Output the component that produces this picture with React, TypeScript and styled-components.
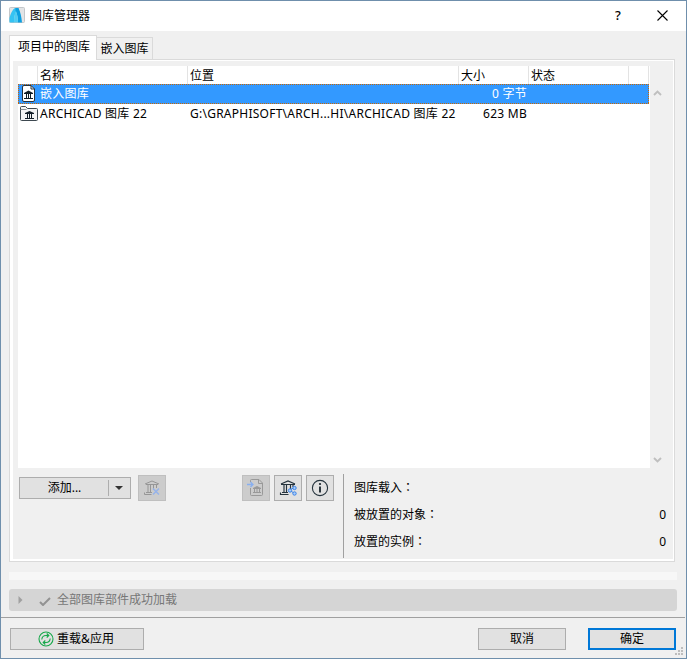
import { ReactNode, useState } from 'react';
import styled, { createGlobalStyle } from 'styled-components';

type Library = {
  name: string;
  location: string;
  size: string;
  status: string;
  icon: ReactNode;
};

const LogoIcon = () => (
  <svg width="16" height="16" viewBox="0 0 16 16">
    <rect x="0.5" y="0.5" width="15" height="15" rx="1" fill="#e2e4e6" stroke="#c3c7ca" />
    <path d="M0.500 15.500V11C1.500 6.500 3.500 2.500 6 1H9.500L7.500 4C5.500 7 5 11 5 15.500z" fill="#35c3f3" />
    <path d="M6.500 1h3C11.500 5 12.500 10 13 15.500H9C8.800 11 8.200 6.500 6.500 4z" fill="#0c9fe0" />
    <path d="M5 15.500C5 10 5.500 6 7 4C8.300 7 8.900 11 9 15.500z" fill="#4fccf3" />
  </svg>
);

const EmbeddedIcon = () => (
  <svg width="13" height="17" viewBox="0 0 13 17">
    <path d="M2 0.500h7l3.500 3.500v11a1.500 1.500 0 0 1-1.500 1.500h-9a1.500 1.500 0 0 1-1.500-1.500v-13a1.500 1.500 0 0 1 1.500-1.500z" fill="#fff" stroke="#27333d" />
    <path d="M9 0.500v3.500h3.500" fill="none" stroke="#27333d" />
    <path d="M2 8L6.500 5.500L11 8V9H2z" fill="#111d26" />
    <path d="M4.500 9v4M6.500 9v4M8.500 9v4M2 13.500h9" fill="none" stroke="#111d26" />
  </svg>
);

const FolderIcon = () => (
  <svg width="18" height="15" viewBox="0 0 18 15">
    <path d="M0.500 13.500V1.500a1 1 0 0 1 1-1h4l2 2h9a1 1 0 0 1 1 1v10a1 1 0 0 1-1 1h-15a1 1 0 0 1-1-1z" fill="#f3f4f4" stroke="#3d4850" />
    <path d="M0.500 3.500h6" stroke="#8c9398" />
    <path d="M5 7L9.500 5L14 7V8H5z" fill="#111d26" />
    <path d="M7.500 8v4M9.500 8v4M11.500 8v4M5 12.500h9" fill="none" stroke="#111d26" />
  </svg>
);

const RemoveIcon = () => (
  <svg width="18" height="18" viewBox="0 0 18 18" fill="none">
    <path d="M2 5L9 2L16 5M3 5.500h12M5 6v7M7.500 6v7M10.500 6v5M13.500 6v3M3 13.500h6M1.500 13.500v2h7" stroke="#969696" />
    <path d="M10 9.500l6 6M16 9.500l-6 6" stroke="#96b3ea" strokeWidth="1.500" />
  </svg>
);

const EmbedIcon = () => (
  <svg width="18" height="18" viewBox="0 0 18 18" fill="none">
    <path d="M3.500 3V1.500a1 1 0 0 1 1-1h7.500L15.500 4v11.500a1 1 0 0 1-1 1h-10a1 1 0 0 1-1-1V9M11.500 0.500v4h4" stroke="#999" />
    <path d="M6 9L10 7L14 9V10H6z" fill="#999" />
    <path d="M7.500 10v3M10 10v3M12.500 10v3M6 13.500h8" stroke="#999" />
    <path d="M0 5.500h6M3.500 3L6 5.500L3.500 8" stroke="#88aff0" strokeWidth="1.300" />
  </svg>
);

const CloudIcon = () => (
  <svg width="18" height="18" viewBox="0 0 18 18" fill="none">
    <path d="M2 5L9 2L16 5M2 5.500h14M5 6v7M7.500 6v7M11.500 6v4M14 6v2M3 13.500h6M1.500 13.500v2h8" stroke="#25333d" strokeWidth="1.150" />
    <path d="M15.500 8.500l-5 2.500l5 3.500" stroke="#3c83e5" />
    <g fill="#a9cdfb" stroke="#3c83e5">
      <circle cx="15.500" cy="9" r="1.700" />
      <circle cx="11" cy="11.500" r="1.700" />
      <circle cx="15.500" cy="14.500" r="1.700" />
    </g>
  </svg>
);

const InfoIcon = () => (
  <svg width="18" height="18" viewBox="0 0 18 18">
    <circle cx="9" cy="9" r="7.600" fill="none" stroke="#25333d" strokeWidth="1.100" />
    <path d="M9 7.500v6" stroke="#17232c" strokeWidth="1.800" />
    <circle cx="9" cy="5" r="1.100" fill="#17232c" />
  </svg>
);

const ReloadIcon = () => (
  <svg width="16" height="16" viewBox="0 0 16 16" fill="none" stroke="#16a84a" strokeWidth="1.100">
    <circle cx="8" cy="8" r="7" />
    <path d="M3.800 8.500C4 6 5.500 4.500 8 4.500h2.500M8.700 2.500L10.800 4.500L8.700 6.500M12.200 7.500C12 10 10.500 11.500 8 11.500H5.500M7.300 9.500L5.200 11.500L7.300 13.500" />
  </svg>
);

const libraries: Library[] = [
  { name: '嵌入图库', location: '', size: '0 字节', status: '', icon: <EmbeddedIcon /> },
  {
    name: 'ARCHICAD 图库 22',
    location: 'G:\\GRAPHISOFT\\ARCH...HI\\ARCHICAD 图库 22',
    size: '623 MB',
    status: '',
    icon: <FolderIcon />,
  },
];

const stats = [
  { label: '图库载入', value: '' },
  { label: '被放置的对象', value: '0' },
  { label: '放置的实例', value: '0' },
];

const App = () => {
  const [tab, setTab] = useState(0);
  const [selected, setSelected] = useState(0);

  return (
    <>
      <GlobalStyle />
      <Dialog>
        <TitleBar>
          <LogoIcon />
          <Title>图库管理器</Title>
          <HelpButton>?</HelpButton>
          <CloseButton>
            <svg width="11" height="11" viewBox="0 0 11 11">
              <path d="M0.500 0.500l10 10M10.500 0.500l-10 10" stroke="#000" strokeWidth="1.100" />
            </svg>
          </CloseButton>
        </TitleBar>

        <Content>
          <Tabs>
            {['项目中的图库', '嵌入图库'].map((label, i) => (
              <Tab key={label} $active={tab === i} onClick={() => setTab(i)}>
                {label}
              </Tab>
            ))}
          </Tabs>
          <Panel>
            <ListArea>
              <List>
                <HeaderRow>
                  <HeaderCell />
                  <HeaderCell>名称</HeaderCell>
                  <HeaderCell>位置</HeaderCell>
                  <HeaderCell>大小</HeaderCell>
                  <HeaderCell>状态</HeaderCell>
                  <HeaderCell />
                </HeaderRow>
                {libraries.map((lib, i) => (
                  <Row key={lib.name} $selected={selected === i} onClick={() => setSelected(i)}>
                    <IconCell>{lib.icon}</IconCell>
                    <Cell>{lib.name}</Cell>
                    <Cell>{lib.location}</Cell>
                    <Cell $right>{lib.size}</Cell>
                    <Cell>{lib.status}</Cell>
                  </Row>
                ))}
              </List>
              <ScrollBar>
                <svg width="9" height="6" viewBox="0 0 9 6" fill="none" stroke="#bfbfbf" strokeWidth="1.900">
                  <path d="M1 5l3.500-3.500L8 5" />
                </svg>
                <svg width="9" height="6" viewBox="0 0 9 6" fill="none" stroke="#bfbfbf" strokeWidth="1.900">
                  <path d="M1 1l3.500 3.500L8 1" />
                </svg>
              </ScrollBar>
            </ListArea>

            <Footer>
              <Tools>
                <AddButton>
                  <AddLabel>添加...</AddLabel>
                  <AddArrow>
                    <svg width="8" height="4" viewBox="0 0 8 4">
                      <path d="M0 0h8L4 4z" fill="#333" />
                    </svg>
                  </AddArrow>
                </AddButton>
                <ToolButton disabled>
                  <RemoveIcon />
                </ToolButton>
                <ToolGroup>
                  <ToolButton disabled>
                    <EmbedIcon />
                  </ToolButton>
                  <ToolButton>
                    <CloudIcon />
                  </ToolButton>
                  <ToolButton>
                    <InfoIcon />
                  </ToolButton>
                </ToolGroup>
              </Tools>
              <Stats>
                {stats.map(({ label, value }) => (
                  <Stat key={label}>
                    <span>
                      {label}
                      <Colon>：</Colon>
                    </span>
                    <span>{value}</span>
                  </Stat>
                ))}
              </Stats>
            </Footer>
          </Panel>
          <Progress />
          <StatusBar>
            <svg width="5" height="8" viewBox="0 0 5 8">
              <path d="M0.500 0l4 4l-4 4z" fill="#a0a0a0" />
            </svg>
            <svg width="12" height="9" viewBox="0 0 12 9">
              <path d="M1 5l3 3l7-7" fill="none" stroke="#929292" strokeWidth="2" />
            </svg>
            全部图库部件成功加载
          </StatusBar>
        </Content>

        <Actions>
          <ReloadButton>
            <ReloadIcon />
            重载&amp;应用
          </ReloadButton>
          <PushButton>取消</PushButton>
          <PushButton $primary>确定</PushButton>
          <Grip width="8" height="8" viewBox="0 0 8 8" fill="#bdbdbd">
            <path d="M6 0h2v2h-2zM3 3h2v2h-2zM6 3h2v2h-2zM0 6h2v2h-2zM3 6h2v2h-2zM6 6h2v2h-2z" />
          </Grip>
        </Actions>
      </Dialog>
    </>
  );
};

const GlobalStyle = createGlobalStyle`
  * {
    box-sizing: border-box;
  }

  body {
    margin: 0;
    overflow: hidden;
  }

  body, button {
    font-family: 'Noto Sans', 'Noto Sans CJK SC', sans-serif;
    font-size: 12px;
    line-height: 16px;
    color: #000;
  }

  svg {
    display: block;
    flex-shrink: 0;
  }
`;

const Dialog = styled.div`
  display: flex;
  flex-direction: column;
  width: 687px;
  height: 659px;
  border: 1px solid #6f8fac;
  background: #f0f0f0;
`;

const TitleBar = styled.header`
  display: flex;
  align-items: center;
  height: 30px;
  padding: 0 18px 2px 8px;
  background: #fff;
`;

const Title = styled.h1`
  flex: 1;
  margin: 2px 0 0 5px;
  font-size: 12px;
  font-weight: 400;
`;

const BareButton = styled.button`
  display: flex;
  align-items: center;
  justify-content: center;
  padding: 0;
  border: none;
  background: none;
`;

const HelpButton = styled(BareButton)`
  width: 12px;
  font-size: 13px;
  font-weight: 500;
`;

const CloseButton = styled(BareButton)`
  width: 11px;
  margin-left: 33px;
`;

const Content = styled.main`
  padding: 4px 9px 0 8px;
`;

const Tabs = styled.div`
  display: flex;
  align-items: flex-end;
  height: 24px;
`;

const Tab = styled.button<{ $active: boolean }>`
  position: relative;
  width: ${({ $active }) => ($active ? 88 : 56)}px;
  height: ${({ $active }) => ($active ? 25 : 22)}px;
  margin-bottom: ${({ $active }) => ($active ? -1 : 0)}px;
  padding: ${({ $active }) => ($active ? '0 0 2px 2px' : '0')};
  border: 1px solid #dadada;
  border-bottom: none;
  border-left-width: ${({ $active }) => ($active ? 1 : 0)}px;
  background: ${({ $active }) => ($active ? '#fff' : '#f0f0f0')};
  white-space: nowrap;
  z-index: ${({ $active }) => ($active ? 1 : 0)};
`;

const Panel = styled.section`
  width: 666px;
  height: 503px;
  padding: 6px 4px 0 8px;
  border: 1px solid #dadada;
  background: #f0f0f0;
  box-shadow: inset 3px 1px 0 #fff, inset -1px -2px 0 #fff;
`;

const ListArea = styled.div`
  display: flex;
  height: 402px;
`;

const List = styled.div`
  width: 632px;
  background: #fff;
`;

const HeaderRow = styled.div`
  display: grid;
  grid-template-columns: 20px 150px 271px 70px 100px 20px;
  height: 18px;
`;

const HeaderCell = styled.div`
  padding: 2px 0 0 2px;
  border-right: 1px solid #e3e3e3;
`;

/* focus rectangle: alternating pixels on all four edges */
const focusRect = `
  linear-gradient(90deg, #cc6600 50%, #3399ff 50%) left top / 2px 1px repeat-x,
  linear-gradient(90deg, #cc6600 50%, #3399ff 50%) left bottom / 2px 1px repeat-x,
  linear-gradient(#cc6600 50%, #3399ff 50%) left top / 1px 2px repeat-y,
  linear-gradient(#cc6600 50%, #3399ff 50%) right top / 1px 2px repeat-y,
  #3399ff
`;

const Row = styled.div<{ $selected: boolean }>`
  display: grid;
  grid-template-columns: 20px 150px 271px 70px 1fr;
  align-items: center;
  width: 631px;
  height: 20px;
  color: ${({ $selected }) => ($selected ? '#fff' : '#000')};
  background: ${({ $selected }) => ($selected ? focusRect : '#fff')};
`;

const IconCell = styled.div`
  display: flex;
  justify-content: center;
  padding: 0 0 1px 1px;
`;

const Cell = styled.div<{ $right?: boolean }>`
  padding: 0 2px;
  letter-spacing: 0.25px;
  text-align: ${({ $right }) => ($right ? 'right' : 'left')};
  white-space: nowrap;
`;

const ScrollBar = styled.div`
  display: flex;
  flex-direction: column;
  justify-content: space-between;
  padding: 24px 0 5px 3px;
`;

const Footer = styled.div`
  display: flex;
  padding-top: 6px;
`;

const Tools = styled.div`
  display: flex;
  align-items: flex-start;
  width: 325px;
  height: 84px;
  padding: 1px 9px 0 1px;
`;

const AddButton = styled.div`
  display: flex;
  align-items: center;
  width: 112px;
  height: 22px;
  margin: 2px 7px 0 0;
  border: 1px solid #adadad;
  background: #e1e1e1;
`;

const AddLabel = styled.span`
  width: 88px;
  padding-left: 1px;
  text-align: center;
`;

const AddArrow = styled.span`
  display: flex;
  align-items: center;
  flex: 1;
  height: 16px;
  padding-left: 6px;
  border-left: 1px solid #adadad;
`;

const ToolGroup = styled.div`
  display: flex;
  gap: 4px;
  margin-left: auto;
`;

const ToolButton = styled(BareButton)`
  width: 28px;
  height: 26px;
  border: 1px solid #adadad;
  background: #e1e1e1;

  &:disabled {
    border-color: #bfbfbf;
    background: #cccccc;
  }
`;

const Stats = styled.div`
  flex: 1;
  padding: 0 4px 0 10px;
  border-left: 1px solid #a0a0a0;
`;

const Stat = styled.div`
  display: flex;
  align-items: center;
  justify-content: space-between;
  height: 27px;
`;

const Colon = styled.span`
  font-family: 'Noto Sans CJK TC', sans-serif;
  line-height: 1;
`;

const Progress = styled.div`
  width: 668px;
  height: 8px;
  margin-top: 10px;
  background: #f7f7f7;
`;

const StatusBar = styled.div`
  display: flex;
  align-items: center;
  width: 668px;
  height: 22px;
  margin-top: 9px;
  padding-left: 9px;
  border-radius: 3px;
  background: #d5d5d5;
  color: #777;

  svg + svg {
    margin: 2px 6px 0 16px;
  }
`;

const Actions = styled.footer`
  position: relative;
  display: flex;
  align-items: flex-start;
  gap: 22px;
  width: 684px;
  height: 41px;
  margin-top: 6px;
  padding: 10px 9px 0;
  border-top: 1px solid #a0a0a0;
`;

const PushButton = styled.button<{ $primary?: boolean }>`
  display: flex;
  align-items: center;
  justify-content: center;
  width: 88px;
  height: 22px;
  padding: 0;
  border: ${({ $primary }) => ($primary ? '2px solid #0078d7' : '1px solid #adadad')};
  background: #e1e1e1;
`;

const ReloadButton = styled(PushButton)`
  gap: 3px;
  width: 134px;
  margin-right: auto;
  padding-right: 2px;
`;

const Grip = styled.svg`
  position: absolute;
  right: 2px;
  bottom: 3px;
`;

export default App;
